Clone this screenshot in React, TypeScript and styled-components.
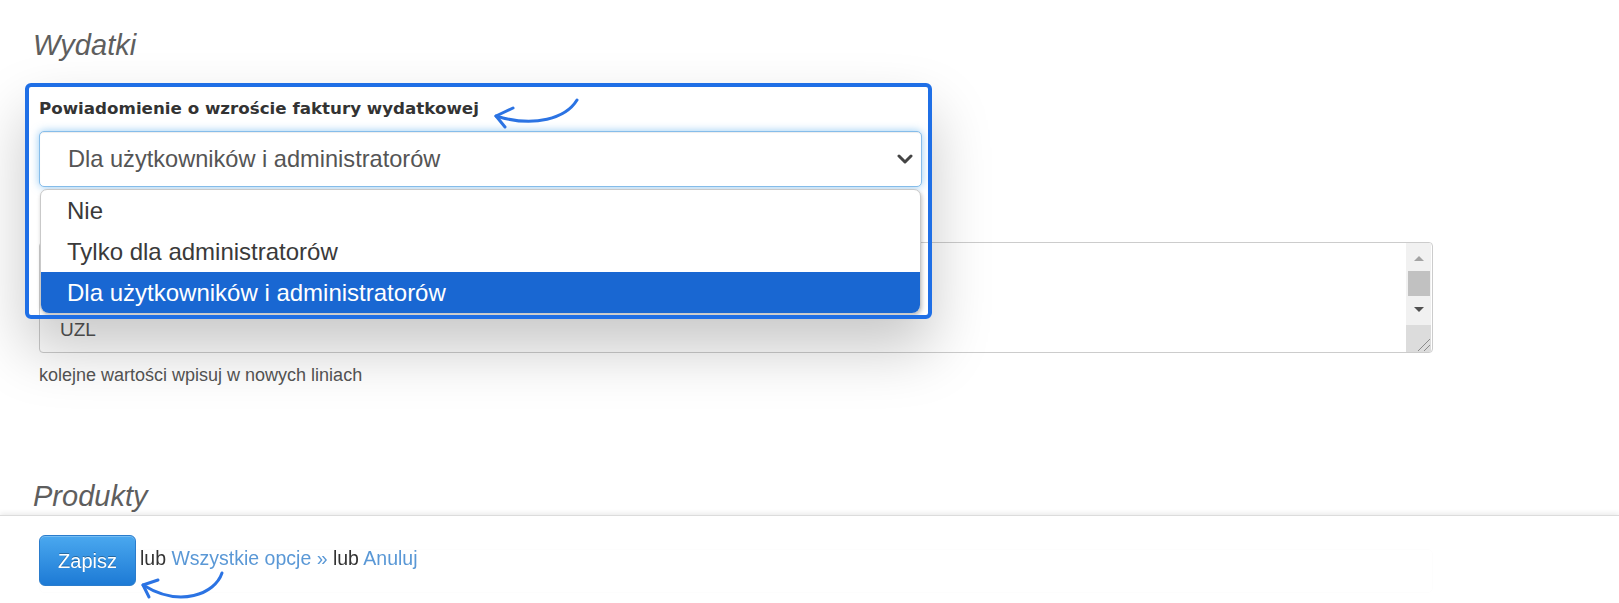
import React from 'react';
import styled, { createGlobalStyle } from 'styled-components';

const GlobalStyle = createGlobalStyle`
  html, body {
    margin: 0;
    padding: 0;
    background: #ffffff;
    overflow: hidden;
    height: 100%;
  }
  body {
    font-family: "Liberation Sans", Arial, sans-serif;
  }
`;

const Page = styled.main`
  padding: 28px 0 0 33px;
`;

const SectionTitle = styled.h3<{ $top?: number }>`
  margin: ${(p) => p.$top ?? 0}px 0 36px;
  font: italic 400 29px/34px "Liberation Sans", Arial, sans-serif;
  color: #5e5e5e;
`;

const Field = styled.div<{ $bottom?: number; $raised?: boolean }>`
  position: relative;
  margin-left: 6px;
  margin-bottom: ${(p) => p.$bottom ?? 0}px;
  z-index: ${(p) => (p.$raised ? 2 : 'auto')};
`;

const FieldLabel = styled.label`
  display: flex;
  align-items: center;
  gap: 7px;
  margin-bottom: 13px;
  font: 700 16.7px/20px "DejaVu Sans", Verdana, sans-serif;
  color: #333333;
`;

const SelectWrap = styled.div`
  position: relative;
  width: 883px;
`;

const SelectBox = styled.div`
  box-sizing: border-box;
  height: 56px;
  display: flex;
  align-items: center;
  justify-content: space-between;
  padding: 0 8px 0 28px;
  border: 1px solid #86bdea;
  border-radius: 5px;
  background: #ffffff;
  box-shadow: inset 0 1px 1px rgba(0, 0, 0, 0.075), 0 0 8px rgba(82, 168, 236, 0.6);
  font: 400 23.6px/28px "Liberation Sans", Arial, sans-serif;
  color: #555555;
`;

const Dropdown = styled.ul`
  position: absolute;
  top: calc(100% + 2px);
  left: 1px;
  right: 1px;
  margin: 0;
  padding: 0;
  list-style: none;
  background: #ffffff;
  border: 1px solid #c9c9c9;
  border-radius: 7px 7px 9px 9px;
  overflow: hidden;
  box-shadow: 1px 2px 4px rgba(0, 0, 0, 0.25);
  z-index: 3;
`;

const Option = styled.li<{ $selected?: boolean }>`
  height: 41px;
  display: flex;
  align-items: center;
  padding-left: 26px;
  font: 400 24px/28px "Liberation Sans", Arial, sans-serif;
  color: ${(p) => (p.$selected ? '#ffffff' : '#3a3a3a')};
  background: ${(p) => (p.$selected ? '#1967d2' : 'transparent')};
`;

const Frame = styled.div`
  position: absolute;
  left: -14px;
  top: -15px;
  width: 907px;
  height: 236px;
  box-sizing: border-box;
  border: 4px solid #1f6fe6;
  border-radius: 6px;
  box-shadow: 0 30px 60px rgba(0, 0, 0, 0.22);
  pointer-events: none;
  z-index: 4;
`;

const Annotation = styled.svg<{ $left: number; $top: number }>`
  position: absolute;
  left: ${(p) => p.$left}px;
  top: ${(p) => p.$top}px;
  overflow: visible;
  z-index: 5;
  pointer-events: none;
`;

const TextArea = styled.div<{ $width: number; $height: number }>`
  position: relative;
  box-sizing: border-box;
  width: ${(p) => p.$width}px;
  height: ${(p) => p.$height}px;
  display: flex;
  border: 1px solid #cccccc;
  border-radius: 4px;
  background: #ffffff;
  overflow: hidden;
`;

const TextLines = styled.div`
  flex: 1;
  display: flex;
  flex-direction: column;
  justify-content: flex-end;
  padding: 0 20px 9px;
  font: 400 19px/26px "Liberation Sans", Arial, sans-serif;
  color: #555555;
`;

const Scrollbar = styled.div`
  width: 25px;
  margin-right: 1px;
  display: flex;
  flex-direction: column;
`;

const Track = styled.div`
  flex: 1;
  display: flex;
  flex-direction: column;
  align-items: center;
  padding-top: 13px;
  background: #f1f1f1;
`;

const ArrowTri = styled.span<{ $down?: boolean }>`
  width: 0;
  height: 0;
  border-left: 5px solid transparent;
  border-right: 5px solid transparent;
  ${(p) =>
    p.$down ? 'border-top: 5px solid #505050;' : 'border-bottom: 5px solid #a3a3a3;'}
`;

const Thumb = styled.span`
  width: 22px;
  height: 25px;
  margin: 10px 0 11px;
  background: #c1c1c1;
`;

const Corner = styled.div`
  height: 27px;
  background: #dcdcdc;
  display: flex;
  align-items: flex-end;
  justify-content: flex-end;
`;

const HelpText = styled.p`
  margin: 11px 0 0;
  font: 400 18px/22px "Liberation Sans", Arial, sans-serif;
  color: #555555;
`;

const GhostInput = styled.div`
  box-sizing: border-box;
  width: 1394px;
  height: 44px;
  margin-top: 33px;
  border: 1px solid #cccccc;
  border-radius: 5px;
`;

const Footer = styled.footer`
  position: fixed;
  left: 0;
  right: 0;
  bottom: 0;
  height: 88px;
  box-sizing: border-box;
  padding: 19px 0 0 39px;
  border-top: 1px solid #dcdcdc;
  background: rgba(255, 255, 255, 0.95);
  box-shadow: 0 -2px 5px rgba(0, 0, 0, 0.08);
  z-index: 10;
`;

const Actions = styled.div`
  display: flex;
  align-items: center;
  height: 51px;
  font: 400 19.5px/24px "Liberation Sans", Arial, sans-serif;
  color: #333333;
`;

const ActionText = styled.span`
  padding-bottom: 6px;
`;

const SaveButton = styled.button`
  width: 97px;
  height: 51px;
  box-sizing: border-box;
  margin-right: 4px;
  padding: 0;
  border: 1px solid #2a7ccc;
  border-radius: 6px;
  background: linear-gradient(#4aa8ef, #1d7ad5);
  box-shadow: inset 0 1px 0 rgba(255, 255, 255, 0.25);
  color: #ffffff;
  font: 400 20px/24px "Liberation Sans", Arial, sans-serif;
  text-shadow: 0 -1px 0 rgba(0, 0, 0, 0.3);
  cursor: pointer;
`;

const Link = styled.a`
  color: #5a98d6;
  text-decoration: none;
`;

const Chevron = () => (
  <svg width="16" height="10" viewBox="0 0 16 10">
    <polyline
      points="2,2 8,8 14,2"
      fill="none"
      stroke="#444"
      strokeWidth="3"
      strokeLinecap="round"
      strokeLinejoin="round"
    />
  </svg>
);

const Grip = () => (
  <svg width="14" height="14" viewBox="0 0 14 14">
    <line x1="1" y1="13" x2="13" y2="1" stroke="#8a8a8a" strokeWidth="1" />
    <line x1="7" y1="13" x2="13" y2="7" stroke="#8a8a8a" strokeWidth="1" />
  </svg>
);

const CurvedArrow = ({ d, head, left, top }: { d: string; head: string; left: number; top: number }) => (
  <Annotation $left={left} $top={top} width="95" height="38" viewBox="0 0 95 38">
    <path d={d} fill="none" stroke="#2b73e3" strokeWidth="3" strokeLinecap="round" />
    <path d={head} fill="none" stroke="#2b73e3" strokeWidth="3" strokeLinecap="round" strokeLinejoin="round" />
  </Annotation>
);

const options = ['Nie', 'Tylko dla administratorów', 'Dla użytkowników i administratorów'];
const units = ['UZL'];

export default function App() {
  return (
    <>
      <GlobalStyle />
      <Page>
        <SectionTitle>Wydatki</SectionTitle>

        <Field $bottom={55} $raised>
          <FieldLabel>Powiadomienie o wzroście faktury wydatkowej</FieldLabel>
          <SelectWrap>
            <SelectBox>
              <span>Dla użytkowników i administratorów</span>
              <Chevron />
            </SelectBox>
            <Dropdown>
              {options.map((o, i) => (
                <Option key={o} $selected={i === options.length - 1}>
                  {o}
                </Option>
              ))}
            </Dropdown>
          </SelectWrap>
          <Frame />
          <CurvedArrow left={451} top={-3} d="M87,5 C76,23 45,33 6,21" head="M23,13 L6,21 L15,32" />
        </Field>

        <Field>
          <TextArea $width={1394} $height={111}>
            <TextLines>
              {units.map((u) => (
                <div key={u}>{u}</div>
              ))}
            </TextLines>
            <Scrollbar>
              <Track>
                <ArrowTri />
                <Thumb />
                <ArrowTri $down />
              </Track>
              <Corner>
                <Grip />
              </Corner>
            </Scrollbar>
          </TextArea>
          <HelpText>kolejne wartości wpisuj w nowych liniach</HelpText>
        </Field>

        <SectionTitle $top={93}>Produkty</SectionTitle>
        <Field>
          <GhostInput />
        </Field>
      </Page>

      <Footer>
        <Actions>
          <SaveButton type="button">Zapisz</SaveButton>
          <ActionText>
            lub <Link href="#">Wszystkie opcje »</Link> lub <Link href="#">Anuluj</Link>
          </ActionText>
        </Actions>
        <CurvedArrow left={135} top={50} d="M87,7 C80,28 45,42 8,19" head="M23,14 L8,19 L14,31" />
      </Footer>
    </>
  );
}
